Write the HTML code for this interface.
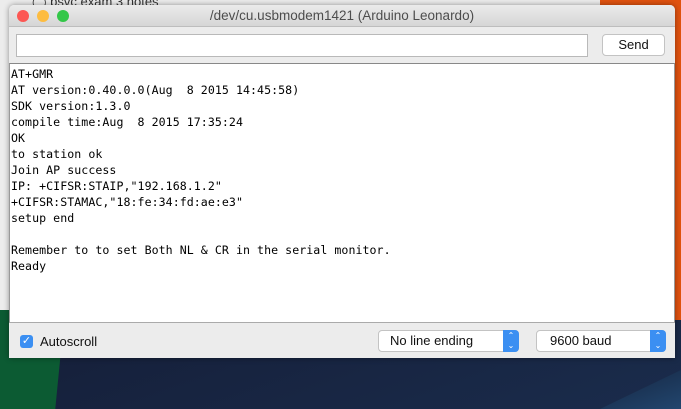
<!DOCTYPE html><html><head><style>
body{margin:0;width:681px;height:409px;overflow:hidden;position:relative;font-family:"Liberation Sans",sans-serif;
background:linear-gradient(160deg,#0e1a33 0%,#16213c 60%,#1a2c4c 100%)}
.bgtop{position:absolute;left:0;top:0;width:681px;height:310px;background:#ececec}
.orange{position:absolute;left:600px;top:0;width:81px;height:320px;background:#e0520f}
.green{position:absolute;left:0;top:310px;width:65px;height:99px;background:#0c5b33;clip-path:polygon(0 0,100% 0,85% 100%,0 100%)}
.blue{position:absolute;left:600px;top:370px;width:81px;height:39px;background:linear-gradient(160deg,#15243f,#22466e);clip-path:polygon(100% 0,100% 100%,0 100%)}
.oth{position:absolute;left:32px;top:-6px;font-size:13px;color:#333}
.win{position:absolute;left:9px;top:5px;width:666px;height:353px;background:#ececec;border-radius:5px 5px 0 0;box-shadow:0 0 6px rgba(0,0,0,.4);overflow:hidden}
.title{position:absolute;left:0;top:0;width:100%;height:21px;background:linear-gradient(#ebebeb,#d6d6d6);border-bottom:1px solid #bdbdbd;text-align:center;font-size:13.5px;line-height:22px;color:#4d4d4d}
.dot{position:absolute;top:5px;width:12px;height:12px;border-radius:50%}
.input{position:absolute;left:7px;top:29px;width:570px;height:21px;background:#fff;border:1px solid #b9b9b9}
.send{position:absolute;left:593px;top:29px;width:61px;height:20px;background:#fff;border:1px solid #c3c3c3;border-radius:4px;font-size:13px;text-align:center;line-height:20px;color:#111}
.text{position:absolute;left:0;top:58px;width:664px;height:258px;background:#fff;border-top:1px solid #888;border-bottom:1px solid #aaa;border-left:1px solid #999;border-right:1px solid #999}
pre{margin:0;position:absolute;left:1px;top:2px;font-family:"DejaVu Sans Mono",monospace;font-size:11.6px;letter-spacing:0.05px;line-height:16px;color:#000}
.cb{position:absolute;left:11px;top:330px;width:13px;height:13px;background:#3b8ff2;border-radius:3px;color:#fff;font-size:11px;line-height:13px;text-align:center}
.lbl{position:absolute;left:31px;top:329px;font-size:13px;color:#111}
.sel{position:absolute;top:325px;height:20px;background:#fff;border:1px solid #c3c3c3;border-radius:4px;font-size:13px;line-height:20px;color:#111}
.sel span{position:absolute;right:-1px;top:-1px;width:16px;height:22px;background:#3b8ff2;border-radius:0 4px 4px 0;color:#fff;font-size:8px;line-height:10px;text-align:center;padding-top:1px;box-sizing:border-box}
</style></head><body>
<div class="bgtop"></div><div class="orange"></div><div class="green"></div><div class="blue"></div>
<div class="oth">◯ bsvc exam 3 notes</div>
<div class="win">
<div class="title">/dev/cu.usbmodem1421 (Arduino Leonardo)
<div class="dot" style="left:8px;background:#fc5753;border:0"></div>
<div class="dot" style="left:28px;background:#fdbc40"></div>
<div class="dot" style="left:48px;background:#33c748"></div></div>
<div class="input"></div>
<div class="send">Send</div>
<div class="text"><pre>AT+GMR
AT version:0.40.0.0(Aug  8 2015 14:45:58)
SDK version:1.3.0
compile time:Aug  8 2015 17:35:24
OK
to station ok
Join AP success
IP: +CIFSR:STAIP,"192.168.1.2"
+CIFSR:STAMAC,"18:fe:34:fd:ae:e3"
setup end

Remember to to set Both NL &amp; CR in the serial monitor.
Ready</pre></div>
<div class="cb">✓</div><div class="lbl">Autoscroll</div>
<div class="sel" style="left:369px;width:139px;"><b style="font-weight:normal;padding-left:11px">No line ending</b><span>⌃<br>⌄</span></div>
<div class="sel" style="left:527px;width:128px;"><b style="font-weight:normal;padding-left:13px">9600 baud</b><span>⌃<br>⌄</span></div>
</div>
</body></html>
